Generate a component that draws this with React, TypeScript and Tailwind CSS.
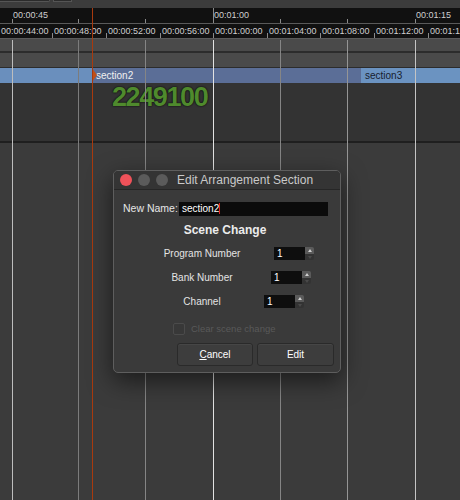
import React from 'react';

const gridLines = [
  { x: 12, color: 'bg-[#bdbdbd]' },
  { x: 78, color: 'bg-[#7c7c7c]' },
  { x: 145, color: 'bg-[#858585]' },
  { x: 213, color: 'bg-[#e2e2e2]' },
  { x: 280, color: 'bg-[#858585]' },
  { x: 347, color: 'bg-[#959595]' },
  { x: 415, color: 'bg-[#c4c4c4]' },
];

const coarseLabels = [
  { x: 12, text: '00:00:45' },
  { x: 213, text: '00:01:00' },
  { x: 415, text: '00:01:15' },
];

const fineLabels = [
  { x: -1, text: '00:00:44:00' },
  { x: 52, text: '00:00:48:00' },
  { x: 106, text: '00:00:52:00' },
  { x: 160, text: '00:00:56:00' },
  { x: 213, text: '00:01:00:00' },
  { x: 267, text: '00:01:04:00' },
  { x: 320, text: '00:01:08:00' },
  { x: 374, text: '00:01:12:00' },
  { x: 428, text: '00:01:16:00' },
];

function SpinBox({ value }: { value: string }) {
  return (
    <div className="flex h-[13px]">
      <div className="w-[31px] bg-[#0e0e0e] text-white text-[10px] leading-[13px] pl-[3px]">{value}</div>
      <div className="w-[9px] flex flex-col rounded-r-[2px] overflow-hidden">
        <div className="h-[7px] bg-[#5a5a5a] flex items-center justify-center">
          <div className="w-0 h-0 border-l-[2px] border-r-[2px] border-b-[3px] border-l-transparent border-r-transparent border-b-[#cfcfcf]" />
        </div>
        <div className="h-[6px] bg-[#333] flex items-center justify-center">
          <div className="w-0 h-0 border-l-[2px] border-r-[2px] border-t-[3px] border-l-transparent border-r-transparent border-t-[#4a4a4a]" />
        </div>
      </div>
    </div>
  );
}

function SceneRow({ label, value, offset }: { label: string; value: string; offset: string }) {
  return (
    <div className="flex items-center h-[24px]">
      <div className="w-[116px] ml-[30px] text-center text-[10px] text-[#e4e4e4]">{label}</div>
      <div className={offset}>
        <SpinBox value={value} />
      </div>
    </div>
  );
}

function EditSectionDialog() {
  return (
    <div className="absolute left-[113px] top-[170px] w-[228px] h-[203px] rounded-[5px] border border-[#5e5e5e] bg-[#3a3a3a] shadow-[0_8px_24px_rgba(0,0,0,0.55)] overflow-hidden">
      <div className="h-[19px] bg-[#343434] border-b border-[#262626] flex items-center pl-[6px]">
        <div className="w-[12px] h-[12px] rounded-full bg-[#f0525a]" />
        <div className="w-[12px] h-[12px] rounded-full bg-[#5b5b5b] ml-[6px]" />
        <div className="w-[12px] h-[12px] rounded-full bg-[#5b5b5b] ml-[6px]" />
        <span className="ml-[9px] text-[12px] text-[#c9c9c9]">Edit Arrangement Section</span>
      </div>

      <div className="flex items-center mt-[11px] pl-[9px]">
        <span className="text-[10.5px] text-[#e6e6e6] w-[56px]">New Name:</span>
        <div className="w-[149px] h-[14px] bg-[#0b0b0b] flex items-center pl-[3px]">
          <span className="text-[10px] text-white">section2</span>
          <div className="w-px h-[11px] bg-[#e02020]" />
        </div>
      </div>

      <div className="text-center text-[12px] font-bold text-[#ececec] mt-[4px] pr-[4px]">Scene Change</div>

      <div className="mt-[3px]">
        <SceneRow label="Program Number" value="1" offset="ml-[14px]" />
        <SceneRow label="Bank Number" value="1" offset="ml-[11px]" />
        <SceneRow label="Channel" value="1" offset="ml-[4px]" />
      </div>

      <div className="flex items-center mt-[8px] pl-[59px]">
        <div className="w-[12px] h-[12px] rounded-[2px] border border-[#4b4b4b] bg-[#383838]" />
        <span className="ml-[6px] text-[9.5px] text-[#595959]">Clear scene change</span>
      </div>

      <div className="flex justify-end gap-[4px] pr-[6px] mt-[7px]">
        <button className="w-[76px] h-[23px] rounded-[3px] border border-[#2a2a2a] bg-[#3d3d3d] text-[10px] text-white shadow-[inset_0_1px_0_rgba(255,255,255,0.05)]">
          <span className="underline underline-offset-1">C</span>ancel
        </button>
        <button className="w-[77px] h-[23px] rounded-[3px] border border-[#2a2a2a] bg-[#3d3d3d] text-[10px] text-white shadow-[inset_0_1px_0_rgba(255,255,255,0.05)]">
          Edit
        </button>
      </div>
    </div>
  );
}

export default function App() {
  return (
    <div className="relative w-[460px] h-[500px] overflow-hidden bg-[#3b3b3b] font-['Liberation_Sans',Arial,sans-serif]">
      {/* toolbar strip */}
      <div className="h-[8px] bg-[#3c3c3c] flex items-start">
        <div className="w-[50px] h-[2px] border-b border-r border-[#555] bg-[#2b2b2b] rounded-br-[2px]" />
        <div className="w-[19px] h-[2px] ml-[3px] border-b border-l border-r border-[#555] bg-[#2b2b2b]" />
      </div>

      {/* coarse ruler */}
      <div className="relative h-[16px] bg-[#111111] border-b border-[#5a5a5a]">
        {coarseLabels.map((l) => (
          <span key={l.text} className="absolute top-[1px] text-[9px] text-[#cfcfcf]" style={{ left: l.x + 1 }}>
            {l.text}
          </span>
        ))}
        {[12, 78, 145, 280, 347, 415].map((x) => (
          <div key={x} className="absolute bottom-0 w-px h-[4px] bg-[#8a8a8a]" style={{ left: x }} />
        ))}
        <div className="absolute left-[213px] top-0 bottom-0 w-px bg-[#8a8a8a]" />
      </div>

      {/* fine ruler */}
      <div className="relative h-[15px] bg-[#111111] border-b border-[#5a5a5a]">
        {fineLabels.map((l) => (
          <span key={l.text} className="absolute top-[1px] text-[9px] text-[#cfcfcf] whitespace-nowrap" style={{ left: l.x + 2 }}>
            {l.text}
          </span>
        ))}
        {fineLabels.map((l) => (
          <div key={l.text + 't'} className="absolute bottom-0 w-px h-[5px] bg-[#8a8a8a]" style={{ left: l.x }} />
        ))}
      </div>

      {/* tracks */}
      <div className="h-[14px] bg-[#4a4a4a] border-b-2 border-[#2c2c2c]" />
      <div className="h-[15px] bg-[#4a4a4a] border-b border-[#2c2c2c]" />

      {/* arrangement sections */}
      <div className="flex h-[15px] text-[10px] leading-[15px]">
        <div className="w-[92px] bg-[#6a8fbd]" />
        <div className="relative w-[269px] bg-[#5b6e97] text-[#f0f0f0] pl-[4px]">
          <div className="absolute left-0 top-0 w-0 h-0 border-t-[7px] border-b-[7px] border-l-[5px] border-t-transparent border-b-transparent border-l-[#c0501a]" />
          section2
        </div>
        <div className="flex-1 bg-[#6b93c1] text-[#17202e] pl-[4px]">section3</div>
      </div>

      <div className="h-[58px] bg-[#333333] pl-[112px] pt-[1px]">
        <span className="text-[27px] font-bold leading-[26px] tracking-[-1.4px] text-[#4f8a2d] [text-shadow:0_0_2px_#0d0d0d,0_0_1px_#0d0d0d]">
          2249100
        </span>
      </div>
      <div className="h-[2px] bg-[#1f1f1f]" />

      {/* grid lines */}
      {gridLines.map((g) => (
        <div key={g.x} className={`absolute top-[40px] bottom-0 w-px ${g.color}`} style={{ left: g.x }} />
      ))}

      {/* playhead */}
      <div className="absolute left-[92px] top-[8px] bottom-0 w-px bg-[#a83a0e]" />

      <EditSectionDialog />
    </div>
  );
}
